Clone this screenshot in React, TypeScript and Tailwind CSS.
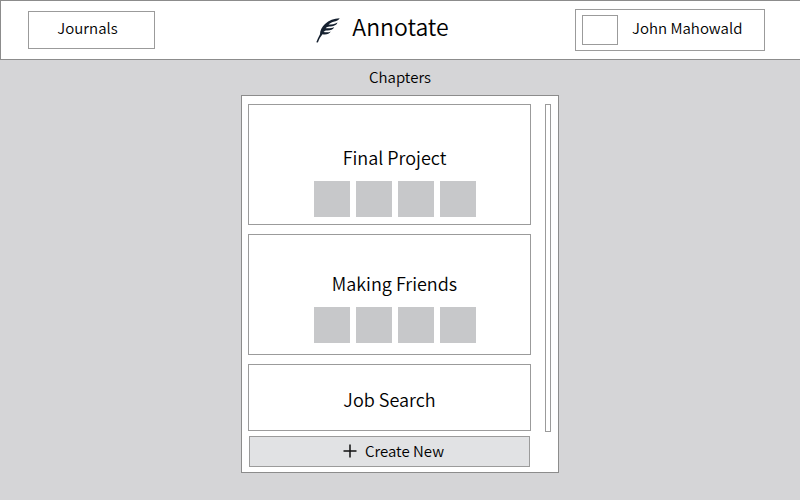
const chapters = [
  { title: 'Final Project', entries: 4, pad: 'pb-[7px]' },
  { title: 'Making Friends', entries: 4, pad: 'pb-[11px]' },
];

function Feather() {
  return (
    <svg viewBox="0 0 24 26" className="h-[26px] w-6 shrink-0" aria-hidden="true">
      <path
        d="M0.3 25.200 C1.300 22.500 2.600 19.800 4 17.300 C3.900 13.500 6 9.800 9 7 C13 3.200 18 1.600 23.700 1.200 C22.800 3 20.500 3.900 17.500 4.800 C15.500 5.500 13.700 6.400 12.500 7.600 C15.500 7.600 18.800 7.300 21.500 5.500 C20.500 8.500 17 9.400 13.500 9.600 C11.800 9.700 10.500 10.300 9.700 11.200 C12.500 11.300 15.500 11.500 18.200 10 C17.200 12.800 14 13.500 11 13.400 C9.300 13.400 8.200 14 7.500 14.900 C9.800 15.200 12.300 15.600 14.800 14.400 C13.300 17 10.300 17.800 6.500 17.200 C4.500 19.700 3 22.300 1.900 25.400 Z"
        fill="#15202f"
      />
    </svg>
  );
}

function Chapter({ title, entries, pad }: { title: string; entries: number; pad: string }) {
  return (
    <li
      className={`flex h-[121px] flex-col items-center justify-end gap-2.5 border border-[#9b9b9b] bg-white pl-2.5 ${pad}`}
    >
      <h3 className="text-[18px] leading-7">{title}</h3>
      <div className="flex gap-1.5">
        {Array.from({ length: entries }, (_, i) => (
          <div key={i} className="size-9 bg-[#c7c8ca]" />
        ))}
      </div>
    </li>
  );
}

export default function App() {
  return (
    <div className="flex min-h-screen flex-col bg-[#d5d5d7] font-['Noto_Sans_CJK_SC',sans-serif] font-[350] text-black">
      <header className="grid h-[60px] grid-cols-[1fr_auto_1fr] items-center border border-r-0 border-[#8c8c8c] bg-white pr-[35px] pl-[27px]">
        <button className="h-[38px] w-[127px] justify-self-start border border-[#9b9b9b] pr-2 pb-1 text-[15px] leading-6">
          Journals
        </button>
        <div className="flex items-center gap-3 pr-7">
          <Feather />
          <h1 className="pb-2 text-[23px] leading-8">Annotate</h1>
        </div>
        <button className="flex h-[42px] w-[190px] items-center gap-3.5 justify-self-end border border-[#9b9b9b] pl-1.5 text-[15px] leading-6">
          <span className="h-[30px] w-9 border border-[#9b9b9b]" />
          <span className="pb-1">John Mahowald</span>
        </button>
      </header>
      <main className="flex flex-col items-center pt-[5px]">
        <h2 className="text-[15px] leading-6">Chapters</h2>
        <section className="mt-1.5 flex w-[318px] gap-3.5 border border-[#8c8c8c] bg-white px-1.5 pt-2 pb-[5px]">
          <div className="w-[283px]">
            <ul className="flex flex-col gap-[9px]">
              {chapters.map((c) => (
                <Chapter key={c.title} {...c} />
              ))}
              <li className="flex h-[67px] items-center justify-center border border-[#9b9b9b] pt-0.5">
                <h3 className="text-[18px] leading-7">Job Search</h3>
              </li>
            </ul>
            <div className="px-px pt-[5px]">
              <button className="flex h-[31px] w-full items-center justify-center gap-2 border border-[#9b9b9b] bg-[#e1e2e4] pb-0.5 pl-2 text-[15px] leading-6">
                <svg viewBox="0 0 14 14" className="size-3.5" aria-hidden="true">
                  <path d="M7 0.500v13M0.500 7h13" stroke="#111" strokeWidth="1.500" />
                </svg>
                Create New
              </button>
            </div>
          </div>
          <div className="mb-[35px] w-1.5 border border-[#9b9b9b] bg-white" />
        </section>
      </main>
    </div>
  );
}
